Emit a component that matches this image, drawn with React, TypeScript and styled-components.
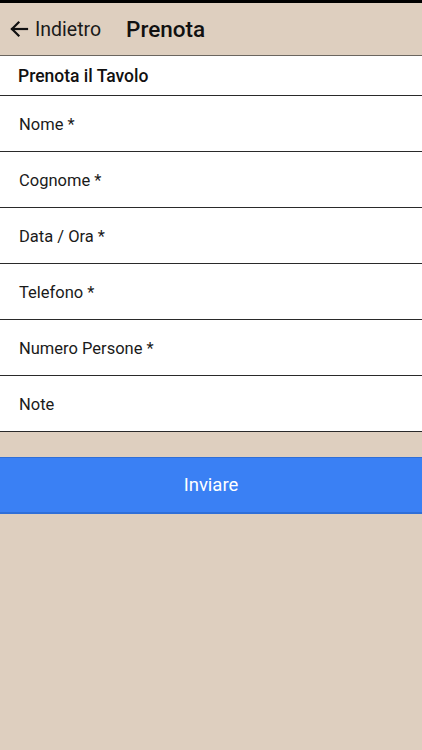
import React from "react";
import styled, { createGlobalStyle } from "styled-components";

const Global = createGlobalStyle`
  html, body { margin: 0; padding: 0; background: #decfbf; }
  body { font-family: Roboto, "Noto Sans", sans-serif; }
  * { box-sizing: border-box; }
`;

const Page = styled.div`
  min-height: 750px;
  background: #decfbf;
  border-top: 3px solid #000;
  display: flex;
  flex-direction: column;
`;

const Header = styled.header`
  height: 53px;
  display: flex;
  align-items: center;
  padding-left: 9px;
  border-bottom: 1px solid #6b665f;
  color: #111;
`;

const Back = styled.div`
  display: flex;
  align-items: center;
  gap: 6px;
  font-size: 19.5px;
  font-weight: 400;
  color: #1a1a1a;
  margin-right: 25px;
`;

const Title = styled.h1`
  margin: 0;
  font-size: 22.5px;
  font-weight: 500;
  color: #111;
`;

const Section = styled.div`
  background: #fff;
  height: 40px;
  display: flex;
  align-items: center;
  padding-left: 18px;
  font-size: 17.5px;
  font-weight: 500;
  color: #111;
  border-bottom: 1px solid #2a2a2a;
`;

const Row = styled.div`
  background: #fff;
  height: 56px;
  display: flex;
  align-items: center;
  padding-left: 19px;
  padding-top: 2px;
  font-size: 16.5px;
  color: #1a1a1a;
  border-bottom: 1.5px solid #2a2a2a;
`;

const Button = styled.button`
  margin-top: 25px;
  height: 57px;
  width: 100%;
  border: none;
  border-top: 1px solid #2f6fd8;
  border-bottom: 2px solid #2f6fd8;
  background: #3a80f4;
  color: #fff;
  font-family: Roboto, sans-serif;
  font-size: 18.5px;
  font-weight: 400;
`;

const fields = ["Nome *", "Cognome *", "Data / Ora *", "Telefono *", "Numero Persone *", "Note"];

export default function App() {
  return (
    <>
      <Global />
      <Page>
        <Header>
          <Back>
            <svg width="20" height="20" viewBox="0 0 20 20" fill="none" stroke="#111" strokeWidth="2.2" strokeLinecap="square">
              <path d="M18 10H3" />
              <path d="M9.5 3.5L3 10l6.5 6.5" />
            </svg>
            Indietro
          </Back>
          <Title>Prenota</Title>
        </Header>
        <Section>Prenota il Tavolo</Section>
        {fields.map((f) => (
          <Row key={f}>{f}</Row>
        ))}
        <Button>Inviare</Button>
      </Page>
    </>
  );
}
